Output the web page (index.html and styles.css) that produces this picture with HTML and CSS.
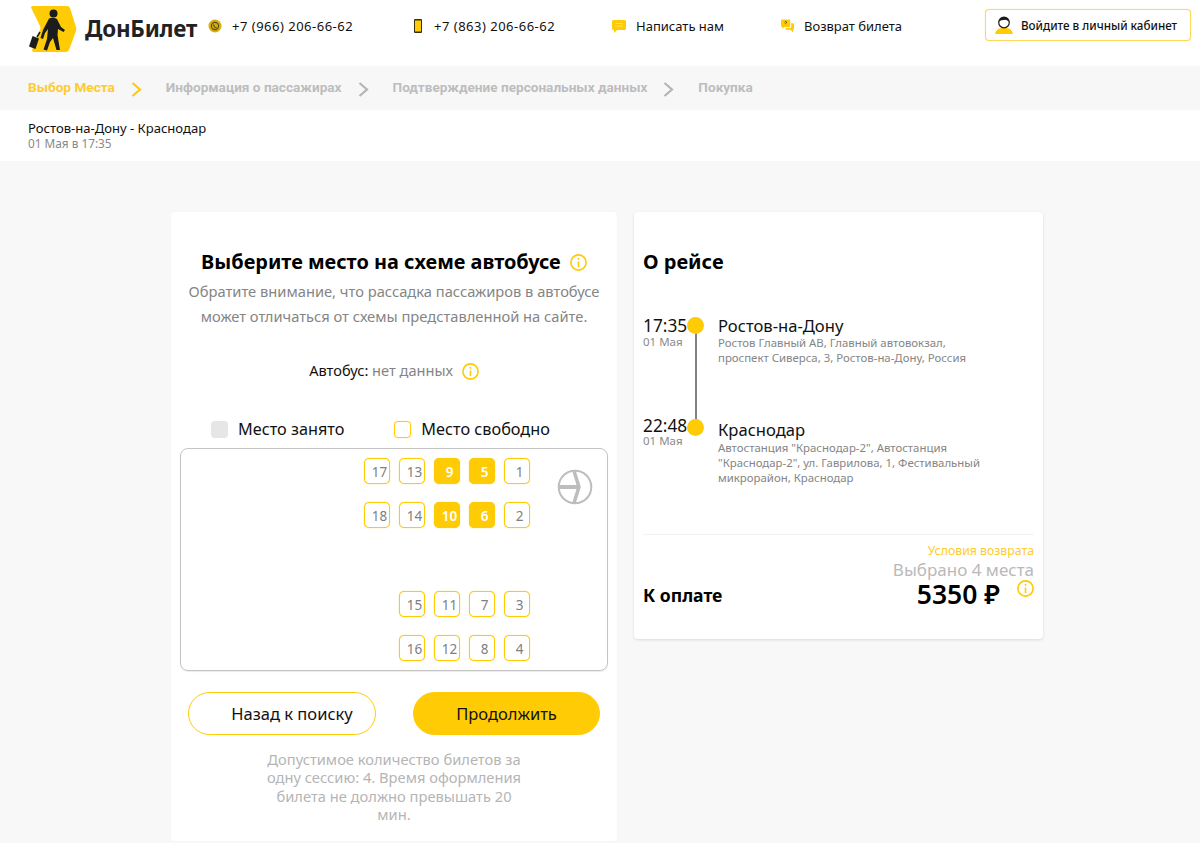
FILE: index.html
```html
<!DOCTYPE html>
<html lang="ru">
<head>
<meta charset="utf-8">
<title>ДонБилет</title>
<link rel="stylesheet" href="styles.css">
</head>
<body>
<header class="header">
  <a class="logo">
    <svg class="logo-mark" width="48" height="46" viewBox="0 0 48 46">
      <path d="M2 1.500Q2 0 4 0H38Q40 0 41 2L47 21Q47.500 23 47 25L40 44Q39 46 37 46H5Q3 46 3 44L11 24Q12 22 11 20Z" fill="#ffcb05"/>
      <circle cx="24.500" cy="7.500" r="4" fill="#1c1c1c"/>
      <path d="M20 12.500Q24 11 28 13L32 21L36 24L34.500 26L29 23L28.500 29L31 44H27.500L24 32L21 36L18 44.500L14.500 43.500L18 33L19 23L16 27L14 33L11.500 32L14 24Z" fill="#1c1c1c"/>
      <path d="M3.500 30L10 32.500L6.500 43L0 40.500Z" fill="#1c1c1c"/>
      <path d="M8 31L11 26" stroke="#1c1c1c" stroke-width="1.500"/>
    </svg>
    <span class="logo-text">ДонБилет</span>
  </a>
  <div class="contact">
    <svg class="contact-icon" width="14" height="14" viewBox="0 0 14 14"><circle cx="7" cy="7" r="6.500" fill="#d6ad10"/><circle cx="7" cy="7" r="3.600" fill="none" stroke="#5b4c10" stroke-width="1.100"/><path d="M5.500 5.500Q6 8.500 8.800 8.800" fill="none" stroke="#5b4c10" stroke-width="1.100"/></svg>
    <span class="digits">+7 (966) 206-66-62</span>
  </div>
  <div class="contact">
    <svg class="contact-icon phone" width="10" height="14" viewBox="0 0 10 14"><rect x="1" y="0" width="8" height="14" rx="1" fill="#3a3008"/><rect x="2" y="1.500" width="6" height="11" fill="#ffcb05"/></svg>
    <span class="digits">+7 (863) 206-66-62</span>
  </div>
  <div class="contact">
    <svg class="contact-icon" width="14" height="13" viewBox="0 0 14 13"><path d="M1.500 0H12.500Q14 0 14 1.500V8.500Q14 10 12.500 10H5L2 13V10H1.500Q0 10 0 8.500V1.500Q0 0 1.500 0Z" fill="#ffcb05"/><path d="M3.500 3.500H10.500M3.500 6H10.500" stroke="#ffe27a" stroke-width="1.200"/></svg>
    <span>Написать нам</span>
  </div>
  <div class="contact">
    <svg class="contact-icon" width="13" height="14" viewBox="0 0 14 14"><path d="M1 0H9Q10 0 10 1V7Q10 8 9 8H4L1.500 10V8H1Q0 8 0 7V1Q0 0 1 0Z" fill="#ffcb05"/><path d="M11 4H13Q14 4 14 5V10Q14 11 13 11V14L10 11H5V9H10Q11 9 11 8Z" fill="#ffcb05"/><path d="M3.800 2.800Q5 1.400 6.200 2.800L5 4.300V5" fill="none" stroke="#4b3d05" stroke-width=".9"/></svg>
    <span>Возврат билета</span>
  </div>
  <button class="login">
    <svg width="18" height="18" viewBox="0 0 18 18"><path d="M0 18Q1 13 6 12H12Q17 13 18 18Z" fill="#ffcb05"/><circle cx="9" cy="6.500" r="5.300" fill="#fff" stroke="#1c1c1c" stroke-width="1.200"/><path d="M3.800 6Q5 1 9 1Q13 1 14.200 6Q11 3 9 4Q6 3.500 3.800 6Z" fill="#1c1c1c"/></svg>
    <span>Войдите в личный кабинет</span>
  </button>
</header>

<nav class="steps">
  <span class="step active">Выбор Места</span>
  <svg class="chev" width="11" height="15" viewBox="0 0 11 15"><path d="M1.500 1L9 7.500L1.500 14" fill="none" stroke="#ffcb05" stroke-width="2.200"/></svg>
  <span class="step">Информация о пассажирах</span>
  <svg class="chev" width="11" height="15" viewBox="0 0 11 15"><path d="M1.500 1L9 7.500L1.500 14" fill="none" stroke="#b5b5b5" stroke-width="2.200"/></svg>
  <span class="step">Подтверждение персональных данных</span>
  <svg class="chev" width="11" height="15" viewBox="0 0 11 15"><path d="M1.500 1L9 7.500L1.500 14" fill="none" stroke="#b5b5b5" stroke-width="2.200"/></svg>
  <span class="step">Покупка</span>
</nav>

<section class="route">
  <div class="route-name">Ростов-на-Дону - Краснодар</div>
  <div class="route-date">01 Мая в 17:35</div>
</section>

<main class="content">
  <section class="card seat-card">
    <h1 class="title">Выберите место на схеме автобусе
      <svg class="info title-info" width="17" height="17" viewBox="0 0 17 17"><circle cx="8.500" cy="8.500" r="7.600" fill="none" stroke="#ffcb05" stroke-width="1.600"/><path d="M8.500 7.500V13M8.500 4V5.800" stroke="#ffcb05" stroke-width="1.600"/></svg>
    </h1>
    <p class="note">Обратите внимание, что рассадка пассажиров в автобусе может отличаться от схемы представленной на сайте.</p>
    <div class="bus-line">
      <span class="bus-label">Автобус:</span> <span class="bus-value">нет данных</span>
      <svg class="info bus-info" width="17" height="17" viewBox="0 0 17 17"><circle cx="8.500" cy="8.500" r="7.600" fill="none" stroke="#ffcb05" stroke-width="1.600"/><path d="M8.500 7.500V13M8.500 4V5.800" stroke="#ffcb05" stroke-width="1.600"/></svg>
    </div>
    <div class="legend">
      <span class="legend-item"><i class="swatch busy"></i>Место занято</span>
      <span class="legend-item"><i class="swatch free"></i>Место свободно</span>
    </div>
    <div class="bus">
      <div class="seats">
        <span class="seat">17</span><span class="seat">13</span><span class="seat on">9</span><span class="seat on">5</span><span class="seat">1</span>
        <span class="seat">18</span><span class="seat">14</span><span class="seat on">10</span><span class="seat on">6</span><span class="seat">2</span>
        <span class="seat-gap"></span><span class="seat">15</span><span class="seat">11</span><span class="seat">7</span><span class="seat">3</span>
        <span class="seat-gap"></span><span class="seat">16</span><span class="seat">12</span><span class="seat">8</span><span class="seat">4</span>
      </div>
      <svg class="wheel" width="36" height="36" viewBox="0 0 36 36"><circle cx="18" cy="18" r="16.300" fill="none" stroke="#bdbdbd" stroke-width="2"/><path d="M2 18H21" stroke="#bdbdbd" stroke-width="4"/><path d="M17 2L22 18L17 34" fill="none" stroke="#bdbdbd" stroke-width="3.500"/></svg>
    </div>
    <div class="actions">
      <button class="btn btn-back">Назад к поиску</button>
      <button class="btn btn-next">Продолжить</button>
    </div>
    <p class="limit">Допустимое количество билетов за одну сессию: 4. Время оформления билета не должно превышать 20 мин.</p>
  </section>

  <aside class="card trip-card">
    <h2 class="trip-title">О рейсе</h2>
    <div class="timeline">
      <div class="stop stop-from">
        <div class="time"><div class="clock">17:35</div><div class="day">01 Мая</div></div>
        <i class="dot"></i>
        <div class="place"><div class="city">Ростов-на-Дону</div><div class="addr">Ростов Главный АВ, Главный автовокзал, проспект Сиверса, 3, Ростов-на-Дону, Россия</div></div>
      </div>
      <div class="stop stop-to">
        <div class="time"><div class="clock">22:48</div><div class="day">01 Мая</div></div>
        <i class="dot"></i>
        <div class="place"><div class="city">Краснодар</div><div class="addr">Автостанция "Краснодар-2", Автостанция "Краснодар-2", ул. Гаврилова, 1, Фестивальный микрорайон, Краснодар</div></div>
      </div>
    </div>
    <div class="pay">
      <div class="pay-label">К оплате</div>
      <div class="pay-right">
        <a class="refund">Условия возврата</a>
        <div class="chosen">Выбрано 4 места</div>
        <div class="price-row">
          <span class="price">5350 ₽</span>
          <svg class="info price-info" width="17" height="17" viewBox="0 0 17 17"><circle cx="8.500" cy="8.500" r="7.600" fill="none" stroke="#ffcb05" stroke-width="1.600"/><path d="M8.500 7.500V13M8.500 4V5.800" stroke="#ffcb05" stroke-width="1.600"/></svg>
        </div>
      </div>
    </div>
  </aside>
</main>
</body>
</html>
```

FILE: styles.css
```css
* { box-sizing: border-box; }
html, body { margin: 0; padding: 0; }
body {
  width: 1200px;
  height: 843px;
  overflow: hidden;
  background: #f8f8f8;
  color: #000;
  font-family: "Noto Sans", "Open Sans", sans-serif;
}
.header {
  height: 66px;
  background: #fff;
  display: grid;
  grid-template-columns: 179px 205px 199px 169px 204px 206px;
  padding-left: 29px;
  align-items: center;
}
.logo { display: flex; align-items: center; height: 50px; margin-top: -8px; }
.logo-mark { flex: none; }
.logo-text {
  margin-left: 8px;
  margin-top: -2px;
  font-size: 22.400px;
  font-weight: 700;
  color: #222;
  letter-spacing: -.2px;
}
.contact {
  display: flex;
  align-items: center;
  font-size: 13px;
  color: #111;
  height: 20px;
  margin-top: -14px;
}
.digits { letter-spacing: .5px; }
.contact-icon { margin-right: 10px; flex: none; }
.contact-icon.phone { margin-right: 11px; }
.login {
  width: 206px;
  height: 32px;
  margin-top: -16px;
  display: flex;
  align-items: center;
  padding: 0 0 0 9px;
  background: #fff;
  border: 1px solid #ffd95c;
  border-radius: 4px;
  box-shadow: 0 0 1px #ffd95c;
  font: 500 11.650px "Noto Sans", sans-serif;
  color: #111;
}
.login span { margin-left: 8px; }
.steps {
  height: 44px;
  background: #f7f7f7;
  display: flex;
  align-items: center;
  padding-left: 28px;
}
.step {
  font: 700 13.600px Roboto, sans-serif;
  color: #bdbdbd;
  margin-top: -2px;
}
.step.active { color: #ffcb2e; }
.chev { margin: 3px 24px 0 16px; flex: none; }
.route {
  height: 51px;
  background: #fff;
  padding: 10px 28px 0;
}
.route-name { font-size: 13.050px; line-height: 16px; color: #111; }
.route-date { font-size: 11.800px; line-height: 15px; color: #8a8a8a; }
.content {
  display: flex;
  align-items: flex-start;
  gap: 17px;
  padding: 51px 0 0 171px;
}
.card {
  background: #fff;
  border-radius: 4px;
}
.seat-card {
  width: 446px;
  height: 629px;
  padding: 36px 9px 0;
  box-shadow: 0 0 2px rgba(0,0,0,.04);
  text-align: center;
}
.title {
  margin: 0;
  font-size: 19.900px;
  line-height: 28px;
  font-weight: 700;
  white-space: nowrap;
}
.title-info { margin-left: 4px; vertical-align: -2px; }
.note {
  margin: 3px 0 0;
  font-size: 14.700px;
  line-height: 25px;
  color: #858585;
}
.bus-line {
  margin-top: 29px;
  font-size: 14.600px;
  line-height: 24px;
}
.bus-label { color: #111; }
.bus-value { color: #858585; }
.bus-info { margin-left: 5px; vertical-align: -4px; }
.legend {
  display: flex;
  margin-top: 35px;
  height: 24px;
  padding-left: 31px;
  font-size: 16.250px;
  color: #111;
  text-align: left;
}
.legend-item { display: flex; align-items: center; }
.legend-item + .legend-item { margin-left: 50px; }
.swatch {
  width: 17px;
  height: 17px;
  border-radius: 4px;
  margin-right: 10px;
}
.swatch.busy { background: #e6e6e6; }
.swatch.free { border: 1px solid #ffcb05; box-shadow: 0 0 1px #ffcb05; }
.bus {
  position: relative;
  margin: 7px 0 0 0;
  width: 428px;
  height: 223px;
  border: 1px solid #c4c4c4;
  border-radius: 8px;
  box-shadow: 0 1px 1px rgba(0,0,0,.08);
  padding: 9px 0 0 183px;
}
.seats {
  display: grid;
  grid-template-columns: repeat(5, 26px);
  grid-template-rows: 26px 26px 26px 26px;
  column-gap: 9px;
  row-gap: 18px;
}
.seats > :nth-child(n+11) { transform: translateY(45px); }
.seat {
  display: flex;
  align-items: center;
  justify-content: center;
  padding-left: 5px;
  padding-top: 2px;
  border: 1px solid #ffcb05;
  border-radius: 5px;
  box-shadow: 0 0 1px #ffcb05;
  font-size: 13.500px;
  color: #807f7f;
  background: #fff;
}
.seat.on { background: #ffcb05; color: #fff; font-weight: 600; }
.wheel { position: absolute; left: 376px; top: 20px; }
.actions {
  display: flex;
  justify-content: space-between;
  padding: 0 8px;
  margin-top: 21px;
}
.btn {
  width: 188px;
  height: 43px;
  border-radius: 22px;
  font: 16.500px "Noto Sans", sans-serif;
  color: #111;
  border: 1px solid #ffcb05;
  background: #fff;
}
.btn-back { padding-left: 26px; }
.btn-next { width: 187px; background: #ffcb05; }
.limit {
  margin: 15px auto 0;
  width: 262px;
  font-size: 14.700px;
  line-height: 18.400px;
  color: #b5b5b5;
}
.trip-card {
  width: 409px;
  height: 427px;
  padding: 36px 9px 0;
  box-shadow: 0 1px 3px rgba(0,0,0,.12);
}
.trip-title {
  margin: 0;
  font-size: 20px;
  line-height: 28px;
  font-weight: 700;
}
.timeline { position: relative; margin-top: 40px; height: 218px; }
.stop { display: flex; align-items: flex-start; position: relative; }
.stop-to { margin-top: 51px; }
.stop-from::after {
  content: "";
  position: absolute;
  left: 52px;
  top: 14px;
  width: 2px;
  height: 104px;
  background: #828282;
}
.time { width: 44px; flex: none; }
.clock { font-size: 17.300px; line-height: 18px; margin-top: 1px; color: #111; white-space: nowrap; }
.day { font-size: 11.500px; line-height: 14px; color: #8a8a8a; }
.stop-to .day { margin-top: -1px; }
.dot {
  width: 17px;
  height: 17px;
  flex: none;
  border-radius: 50%;
  background: #ffcb05;
  margin-top: 1px;
  position: relative;
  z-index: 1;
}
.stop-to .dot { margin-top: 3px; }
.place { margin-left: 14px; width: 265px; padding-top: 1px; }
.stop-to .place { padding-top: 5px; }
.city { font-size: 16.600px; line-height: 18px; color: #111; }
.addr { font-size: 11.400px; line-height: 15px; color: #858585; }
.stop-to .addr { margin-top: 1px; }
.pay {
  border-top: 1px solid #f3f3f3;
  display: flex;
  justify-content: space-between;
  padding-top: 8px;
}
.pay-label { font-size: 17.600px; font-weight: 700; margin-top: 42px; line-height: 20px; }
.pay-right { text-align: right; }
.refund { display: block; font-size: 12.300px; line-height: 16px; color: #ffcb2e; }
.chosen { font-size: 17px; line-height: 20px; margin-top: 1px; color: #b9b9b9; }
.price-row { display: flex; justify-content: flex-end; align-items: flex-start; margin-top: -1px; }
.price { font-size: 26.500px; line-height: 30px; font-weight: 600; margin-right: 17px; margin-top: 0; }
.price-info { margin-top: 1px; }
```
